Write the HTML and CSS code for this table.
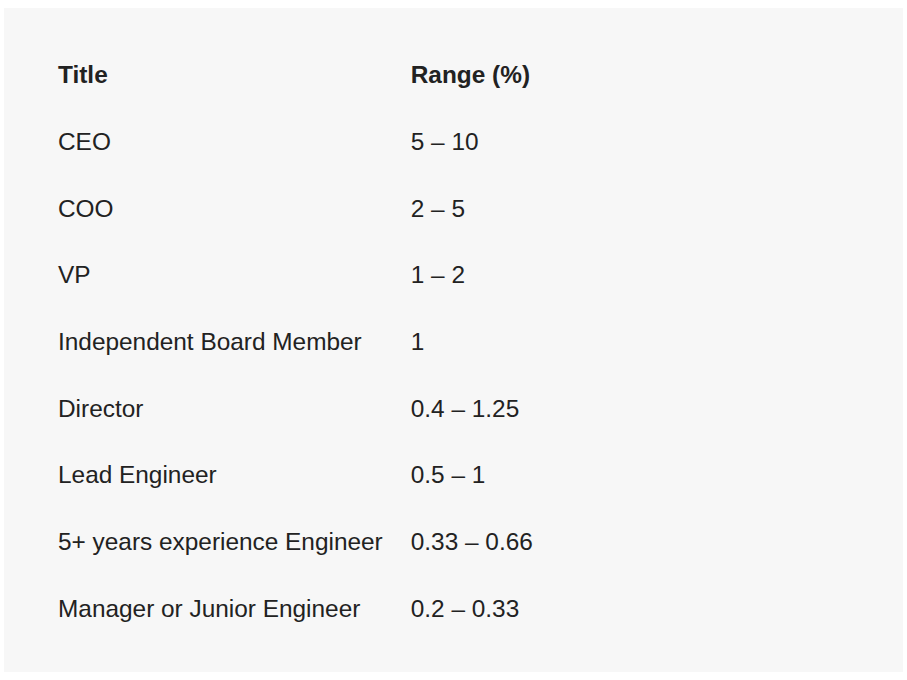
FILE: index.html
```html
<!DOCTYPE html>
<html lang="en">
<head>
<meta charset="utf-8">
<title>Equity ranges</title>
<link rel="stylesheet" href="styles.css">
</head>
<body>
<div class="panel">
  <table class="ranges">
    <thead>
      <tr><th>Title</th><th>Range (%)</th></tr>
    </thead>
    <tbody>
      <tr><td>CEO</td><td>5 – 10</td></tr>
      <tr><td>COO</td><td>2 – 5</td></tr>
      <tr><td>VP</td><td>1 – 2</td></tr>
      <tr><td>Independent Board Member</td><td>1</td></tr>
      <tr><td>Director</td><td>0.4 – 1.25</td></tr>
      <tr><td>Lead Engineer</td><td>0.5 – 1</td></tr>
      <tr><td>5+ years experience Engineer</td><td>0.33 – 0.66</td></tr>
      <tr><td>Manager or Junior Engineer</td><td>0.2 – 0.33</td></tr>
    </tbody>
  </table>
</div>
</body>
</html>
```
FILE: styles.css
```css
html, body {
  margin: 0;
  padding: 0;
  background: #ffffff;
}
body {
  padding: 8px 4px 8px 4px;
}
.panel {
  background: #f7f7f7;
  height: 664px;
  box-sizing: border-box;
  padding: 34px 40px 0 40px;
}
.ranges {
  border-collapse: collapse;
  font-family: "Liberation Sans", Arial, Helvetica, sans-serif;
  font-size: 24.4px;
  color: #222222;
}
.ranges th,
.ranges td {
  text-align: left;
  padding: 0 14px;
  height: 66.7px;
  line-height: 28px;
  vertical-align: middle;
  white-space: nowrap;
}
.ranges th {
  font-weight: bold;
}
.ranges td {
  font-weight: normal;
}
```
